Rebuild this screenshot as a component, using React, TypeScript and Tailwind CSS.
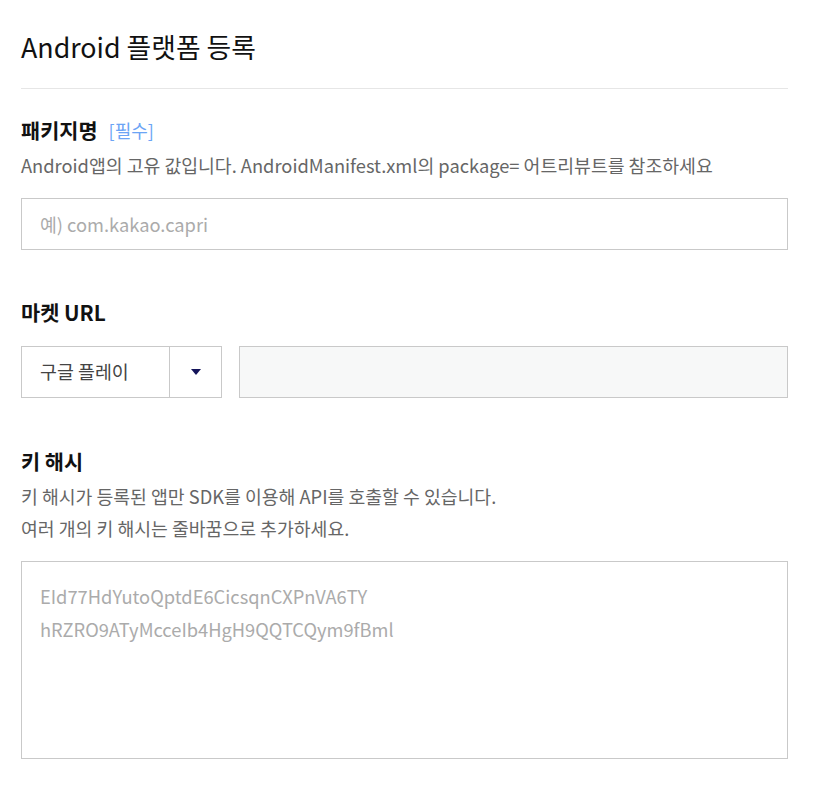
import { useState } from "react"

const font = { fontFamily: '"Noto Sans CJK KR", "Noto Sans", sans-serif' }

export default function App() {
  const [store] = useState("구글 플레이")

  return (
    <div className="min-h-[806px] bg-white" style={font}>
      <div className="w-[767px] ml-[21px] pt-[31px]">
        <h2 className="pb-[25px] border-b border-[#e6e6e6] text-[26.8px] leading-[32px] font-normal text-[#111]">
          Android 플랫폼 등록
        </h2>

        {/* 패키지명 */}
        <div className="mt-[29px] flex items-center gap-[11px] leading-[24px]">
          <span className="text-[20.8px] font-bold text-[#111]">패키지명</span>
          <span className="text-[18px] text-[#6ba4f5]">[필수]</span>
        </div>
        <p className="mt-[11px] text-[18.3px] leading-[24px] text-[#666] whitespace-nowrap">
          Android앱의 고유 값입니다. AndroidManifest.xml의 package= 어트리뷰트를 참조하세요
        </p>
        <input
          className="mt-[21px] block w-full h-[52px] border border-[#c9c9c9] px-[18px] text-[18.3px] text-[#333] placeholder:text-[#ababab] outline-none"
          placeholder="예) com.kakao.capri"
        />

        {/* 마켓 URL */}
        <div className="mt-[50px] text-[20.8px] leading-[24px] font-bold text-[#111]">마켓 URL</div>
        <div className="mt-[22px] flex gap-[17px]">
          <div className="flex w-[201px] h-[52px] border border-[#c9c9c9] shrink-0">
            <div className="flex-1 flex items-center pl-[18px] text-[18.4px] text-[#444]">{store}</div>
            <div className="w-[52px] border-l border-[#c9c9c9] flex items-center justify-center">
              <svg width="10" height="6" viewBox="0 0 10 6">
                <path d="M0 0h10L5 6z" fill="#14145a" />
              </svg>
            </div>
          </div>
          <input className="flex-1 h-[52px] border border-[#c9c9c9] bg-[#f7f8f8] px-[18px] text-[18px] outline-none" />
        </div>

        {/* 키 해시 */}
        <div className="mt-[51px] text-[20.8px] leading-[24px] font-bold text-[#111]">키 해시</div>
        <p className="mt-[7px] text-[18.3px] leading-[32px] text-[#666]">
          키 해시가 등록된 앱만 SDK를 이용해 API를 호출할 수 있습니다.
          <br />
          여러 개의 키 해시는 줄바꿈으로 추가하세요.
        </p>
        <textarea
          className="mt-[17px] block w-full h-[198px] resize-none border border-[#c9c9c9] px-[18px] pt-[18px] text-[18.3px] leading-[33px] text-[#333] placeholder:text-[#ababab] outline-none"
          placeholder={"EId77HdYutoQptdE6CicsqnCXPnVA6TY\nhRZRO9ATyMcceIb4HgH9QQTCQym9fBml"}
        />
      </div>
    </div>
  )
}
